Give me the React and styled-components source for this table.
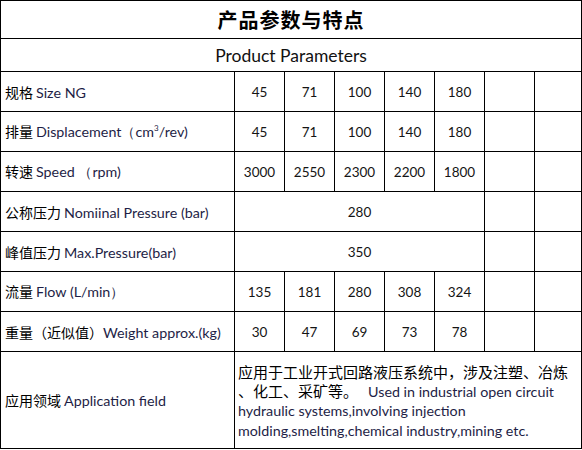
import React from 'react'
import styled, { createGlobalStyle } from 'styled-components'

const GlobalStyle = createGlobalStyle`
    body {
        margin: 0;
        background: #fff;
        font-family: Lato, "Noto Sans CJK SC", sans-serif;
    }
`

const Table = styled.div`
    width: 582px;
    display: grid;
    grid-template-columns: 234px repeat(6, 50px) 47px;
    grid-template-rows: 38px 33px repeat(7, 40px) 97px;
    border-top: 1px solid #000;
    border-left: 1px solid #000;
    box-sizing: border-box;
`

const Cell = styled.div`
    grid-column: span ${p => p.$span || 1};
    box-sizing: border-box;
    border-right: 1px solid #000;
    border-bottom: 1px solid #000;
    display: flex;
    align-items: center;
    justify-content: ${p => (p.$center ? 'center' : 'flex-start')};
    color: #141414;
    font-size: 13.5px;
    white-space: nowrap;
    overflow: hidden;
`

const Title = styled.h1`
    margin: 0;
    font-family: "Noto Sans CJK SC", sans-serif;
    font-size: 20px;
    font-weight: 700;
    color: #000;
    letter-spacing: 1px;
`

const SubTitle = styled.span`
    font-family: Lato, sans-serif;
    font-size: 17.5px;
    color: #111;
`

const Label = styled.span`
    padding-left: 4px;
    display: flex;
    align-items: baseline;
`

const Zh = styled.span`
    font-family: "Noto Sans CJK SC", sans-serif;
    font-size: 14px;
    color: #000;
    margin-right: ${p => (p.$gap ? '3px' : '0')};
`

const En = styled.span`
    font-family: Lato, sans-serif;
    font-size: 14.3px;
    color: #1e1e46;
`

const Sup = styled.sup`
    font-size: 8px;
`

const AppText = styled.div`
    padding: 2px 2px 0 3px;
    display: flex;
    flex-direction: column;
`

const ZhLine = styled.div`
    font-family: "Noto Sans CJK SC", sans-serif;
    font-size: 15px;
    line-height: 19px;
    color: #000;
`

const EnLine = styled.div`
    font-family: Lato, sans-serif;
    font-size: 14.3px;
    line-height: 20px;
    color: #1e1e46;
`

const EnInline = styled.span`
    font-family: Lato, sans-serif;
    font-size: 14.3px;
    color: #1e1e46;
    margin-left: 10px;
`

const rows = [
    { zh: '规格', en: 'Size NG', vals: ['45', '71', '100', '140', '180'] },
    { zh: '排量', en: <>Displacement（cm<Sup>3</Sup>/rev)</>, vals: ['45', '71', '100', '140', '180'] },
    { zh: '转速', en: 'Speed （rpm)', vals: ['3000', '2550', '2300', '2200', '1800'] },
    { zh: '公称压力', en: 'Nomiinal Pressure (bar)', span: '280' },
    { zh: '峰值压力', en: 'Max.Pressure(bar)', span: '350' },
    { zh: '流量', en: 'Flow (L/min）', vals: ['135', '181', '280', '308', '324'] },
    { zh: '重量（近似值）', en: 'Weight approx.(kg)', vals: ['30', '47', '69', '73', '78'], nogap: true },
]

const App = () => {
    return (
        <>
            <GlobalStyle />
            <Table>
                <Cell $span={8} $center>
                    <Title>产品参数与特点</Title>
                </Cell>
                <Cell $span={8} $center>
                    <SubTitle>Product Parameters</SubTitle>
                </Cell>

                {rows.map((r, i) => (
                    <React.Fragment key={i}>
                        <Cell>
                            <Label>
                                <Zh $gap={!r.nogap}>{r.zh}</Zh>
                                <En>{r.en}</En>
                            </Label>
                        </Cell>
                        {r.vals
                            ? r.vals.map((v, j) => <Cell key={j} $center>{v}</Cell>)
                            : <Cell $span={5} $center>{r.span}</Cell>}
                        <Cell />
                        <Cell />
                    </React.Fragment>
                ))}

                <Cell>
                    <Label>
                        <Zh $gap>应用领域</Zh>
                        <En>Application field</En>
                    </Label>
                </Cell>
                <Cell $span={7}>
                    <AppText>
                        <ZhLine>应用于工业开式回路液压系统中，涉及注塑、冶炼</ZhLine>
                        <ZhLine>
                            、化工、采矿等。<EnInline>Used in industrial open circuit</EnInline>
                        </ZhLine>
                        <EnLine>hydraulic systems,involving injection</EnLine>
                        <EnLine>molding,smelting,chemical industry,mining etc.</EnLine>
                    </AppText>
                </Cell>
            </Table>
        </>
    )
}

export default App
